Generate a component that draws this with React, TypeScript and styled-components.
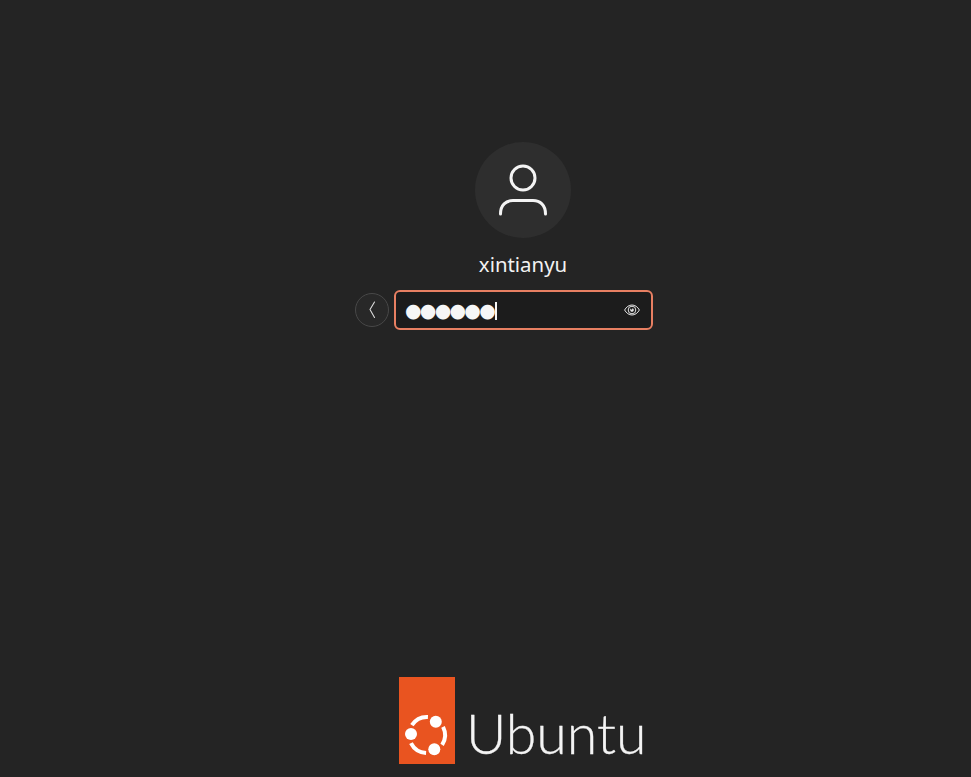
import React from 'react'
import styled, { createGlobalStyle } from 'styled-components'

const GlobalStyle = createGlobalStyle`
  html, body {
    margin: 0;
    padding: 0;
    background: #242424;
  }
`

const Screen = styled.div`
  width: 971px;
  height: 777px;
  overflow: hidden;
  background: #242424;
  display: flex;
  flex-direction: column;
  padding-left: 394px;
  box-sizing: border-box;
`

const LoginColumn = styled.div`
  width: 258px;
  padding-top: 142px;
  display: flex;
  flex-direction: column;
  align-items: center;
`

const Avatar = styled.div`
  width: 96px;
  height: 96px;
  border-radius: 50%;
  background: #2e2e2e;
  display: flex;
`

const UserName = styled.div`
  margin-top: 13px;
  height: 27px;
  line-height: 27px;
  font-family: 'Noto Sans', sans-serif;
  font-size: 20.4px;
  color: #f2f2f2;
`

const EntryRow = styled.div`
  margin-top: 12px;
  margin-left: -39px;
  align-self: flex-start;
  display: flex;
  align-items: center;
  gap: 5px;
`

const BackButton = styled.button`
  width: 34px;
  height: 34px;
  padding: 0;
  border: 1px solid #484848;
  border-radius: 50%;
  background: #282828;
  display: flex;
  align-items: center;
  justify-content: center;
`

const PasswordEntry = styled.div`
  width: 259px;
  height: 40px;
  box-sizing: border-box;
  border: 2px solid #e77f62;
  border-radius: 6px;
  background: #1c1c1c;
  padding: 0 11px 0 9px;
  display: flex;
  align-items: center;
`

const Dots = styled.span`
  font-family: 'DejaVu Sans', sans-serif;
  font-size: 19px;
  line-height: 36px;
  letter-spacing: -1.75px;
  color: #f6f6f6;
`

const Caret = styled.span`
  width: 2px;
  height: 18px;
  margin-top: 2px;
  margin-left: 1.5px;
  background: #f6f6f6;
`

const EyeButton = styled.span`
  margin-left: auto;
  display: flex;
`

const Brand = styled.div`
  margin-top: auto;
  margin-left: 5px;
  margin-bottom: 13px;
  display: flex;
  align-items: flex-end;
`

const LogoTile = styled.div`
  width: 56px;
  height: 87px;
  background: #e95420;
  display: flex;
`

const BrandName = styled.div`
  margin-left: 11px;
  height: 87px;
  line-height: 112px;
  font-family: 'Lato', sans-serif;
  font-weight: 300;
  font-size: 55.5px;
  color: #f4f4f4;
  -webkit-text-stroke: 0.3px #f4f4f4;
`

const polar = (deg: number, r: number) => {
  const a = (deg * Math.PI) / 180
  return `${(28 + r * Math.cos(a)).toFixed(2)} ${(58 + r * Math.sin(a)).toFixed(2)}`
}

const ringArc = (start: number) =>
  `M${polar(start + 30, 18)} A18 18 0 0 1 ${polar(start + 90, 18)}`

const UserIcon = () => (
  <svg width="96" height="96" viewBox="0 0 96 96" fill="none" stroke="#f4f4f4" strokeWidth="3" strokeLinecap="round">
    <circle cx="48" cy="36" r="12" />
    <path d="M25.5 72C25.5 63 31 58.6 38 58.6H58C65 58.6 70.5 63 70.5 72" />
  </svg>
)

const ChevronIcon = () => (
  <svg width="10" height="18" viewBox="0 0 10 18" fill="none" stroke="#dcdcdc" strokeWidth="1.1" strokeLinecap="round" strokeLinejoin="round">
    <path d="M7.5 1L3 8.5 7.5 16.5" />
  </svg>
)

const EyeIcon = () => (
  <svg width="16" height="16" viewBox="0 0 16 16" fill="none" stroke="#e4e4e4">
    <path strokeWidth="1" d="M0.6 8C2.4 4.800 5 3 8 3S13.6 4.800 15.400 8C13.600 11.200 11 13 8 13S2.400 11.200 0.600 8Z" />
    <circle cx="8" cy="8" r="3.800" strokeWidth="1" />
    <path fill="#e4e4e4" stroke="none" d="M6.400 6.500L8 8 8.300 6.300C9.200 6.400 9.800 7.100 9.800 8S9 9.800 8 9.800 6.200 9 6.200 8C6.200 7.400 6.200 7 6.400 6.500Z" />
  </svg>
)

const UbuntuMark = () => (
  <svg width="56" height="87" viewBox="0 0 56 87" fill="none">
    <g stroke="#fff" strokeWidth="4">
      <path d={ringArc(-57)} />
      <path d={ringArc(63)} />
      <path d={ringArc(183)} />
    </g>
    <g fill="#fff">
      <circle cx="36.800" cy="44.700" r="6" />
      <circle cx="12" cy="57.100" r="6" />
      <circle cx="35.300" cy="72.300" r="6" />
    </g>
  </svg>
)

export default function App() {
  return (
    <Screen>
      <GlobalStyle />
      <LoginColumn>
        <Avatar>
          <UserIcon />
        </Avatar>
        <UserName>xintianyu</UserName>
        <EntryRow>
          <BackButton aria-label="Back">
            <ChevronIcon />
          </BackButton>
          <PasswordEntry>
            <Dots>●●●●●●</Dots>
            <Caret />
            <EyeButton>
              <EyeIcon />
            </EyeButton>
          </PasswordEntry>
        </EntryRow>
      </LoginColumn>
      <Brand>
        <LogoTile>
          <UbuntuMark />
        </LogoTile>
        <BrandName>Ubuntu</BrandName>
      </Brand>
    </Screen>
  )
}
